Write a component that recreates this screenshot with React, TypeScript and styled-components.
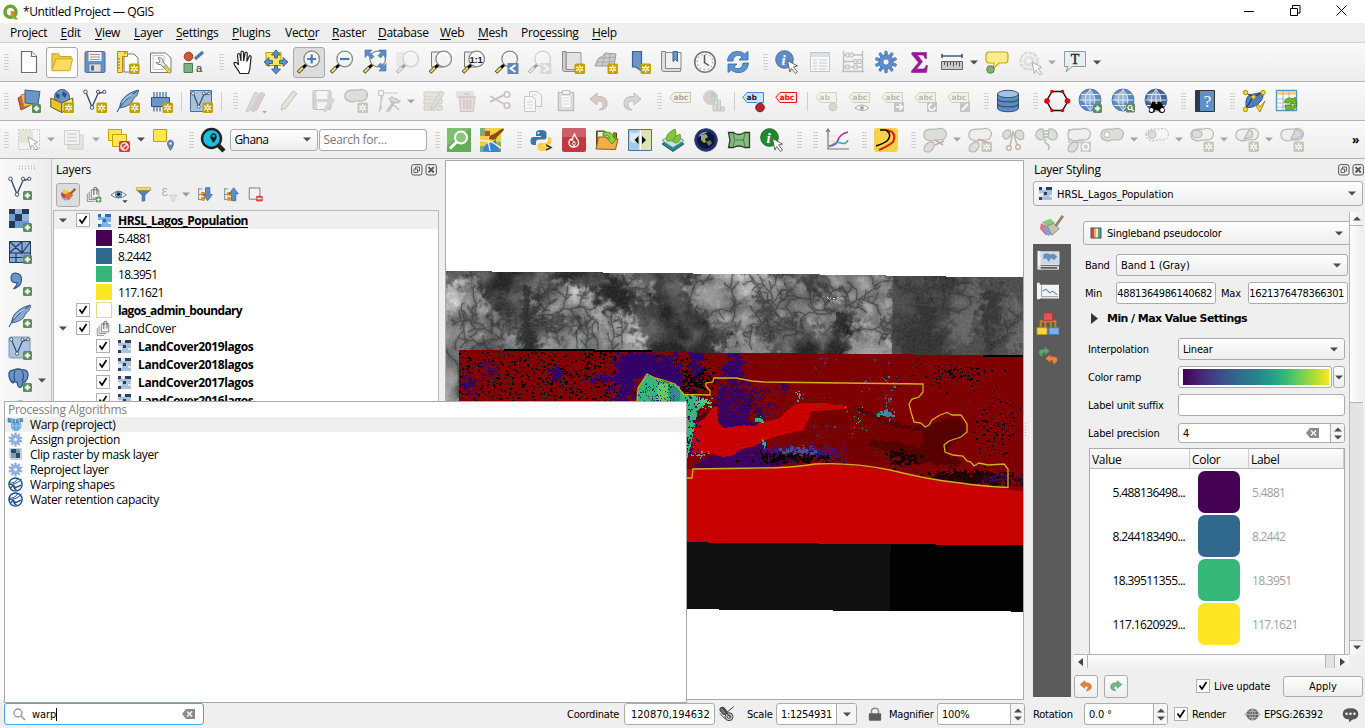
import React, { ReactNode } from "react";
import styled, { createGlobalStyle, css } from "styled-components";

/* ---------- base ---------- */

const Global = createGlobalStyle`
  * { box-sizing: border-box; }
  html, body { margin: 0; padding: 0; overflow: hidden; background: #efefef; }
  svg { display: block; flex: none; }
`;

const segoe = css`font-family: "Open Sans", "Noto Sans", sans-serif; font-stretch: normal; font-size: 12px; letter-spacing: -0.25px;`;
const tahoma = css`font-family: "DejaVu Sans Condensed", "DejaVu Sans", sans-serif; font-stretch: condensed; font-size: 11px; letter-spacing: -0.2px;`;

const Window = styled.div`
  position: relative;
  width: 1365px;
  height: 728px;
  display: flex;
  flex-direction: column;
  background: #efefef;
  color: #000;
  overflow: hidden;
  white-space: nowrap;
  line-height: 16px;
  ${segoe}
`;

const Text = styled.span<{ $w?: number; $ls?: number; $bold?: boolean; $color?: string; $u?: boolean }>`
  display: block;
  flex: none;
  white-space: pre;
  width: ${(p) => (p.$w ? p.$w + "px" : "auto")};
  ${(p) => p.$ls !== undefined && `letter-spacing: ${p.$ls}px;`}
  font-weight: ${(p) => (p.$bold ? 700 : 400)};
  ${(p) => p.$color && `color: ${p.$color};`}
  ${(p) => p.$u && "text-decoration: underline; text-underline-offset: 2px;"}
`;
const lowered = css`${Text} { padding-top: 2px; }`;

/* ---------- drawing helpers ---------- */

const rng = (seed: number) => () => {
  seed |= 0;
  seed = (seed + 0x6d2b79f5) | 0;
  let t = Math.imul(seed ^ (seed >>> 15), 1 | seed);
  t = (t + Math.imul(t ^ (t >>> 7), 61 | t)) ^ t;
  return ((t ^ (t >>> 14)) >>> 0) / 4294967296;
};

const Plus = ({ x = 15, y = 15 }: { x?: number; y?: number }) => (
  <g>
    <rect x={x} y={y} width="9" height="9" rx="1.5" fill="#5b8c5a" />
    <path d={`M${x + 4.5} ${y + 1.8}v5.4M${x + 1.8} ${y + 4.5}h5.4`} stroke="#fff" strokeWidth="2" />
  </g>
);
const Star = ({ x = 13.5, y = 13.5, c = "#c4a000" }: { x?: number; y?: number; c?: string }) => (
  <g>
    <rect x={x} y={y} width="10.5" height="10.5" rx="1.5" fill={c} />
    <path
      d={`M${x + 5.2} ${y + 1.5}v7.5M${x + 1.8} ${y + 3.4}l6.9 3.8M${x + 8.7} ${y + 3.4}l-6.9 3.8`}
      stroke="#fff"
      strokeWidth="1.4"
    />
    <circle cx={x + 5.2} cy={y + 5.3} r="1" fill={c} />
  </g>
);
const Lens = ({ children, back }: { children?: ReactNode; back?: boolean }) => (
  <g>
    {back && <path d="M2.5 2h12v15H2.5z" fill="#eee" stroke="#777" />}
    <path d="M1 22.5L6 17.5" stroke="#333" strokeWidth="3.6" />
    <path d="M1.5 22L6.5 17" stroke="#fcd94a" strokeWidth="2.2" />
    <path d="M6 17.6L9.5 14.5" stroke="#000" strokeWidth="3" />
    <circle cx="14.7" cy="9" r="7.8" fill="#f2f4f3" fillOpacity=".95" stroke="#888a85" strokeWidth="1.3" />
    <path d="M8.5 7a6.8 6.8 0 0 1 12-1" stroke="#fff" fill="none" strokeWidth="1.4" />
    {children}
  </g>
);
const Cursor = ({ x, y }: { x: number; y: number }) => (
  <path transform={`translate(${x} ${y})`} d="M0 0l10 5.5-4 1 4 5-2 1.5-4-5-1.6 3.6z" fill="#fff" stroke="#555" strokeWidth=".9" />
);
const Tag = ({ t, c = "#c9c5a8", f = "#f3f1e2", tc = "#aaa" }: { t: string; c?: string; f?: string; tc?: string }) => (
  <g>
    <path d="M.8 8.2L5 3.5h16.5v10H5z" fill={f} stroke={c} />
    <text x="4.6" y="11.4" fontFamily="DejaVu Sans" fontWeight="700" fontSize="7.6" fill={tc} letterSpacing="-.2">{t}</text>
  </g>
);
const VNodes = () => (
  <g fill="none" stroke="#3d4f63">
    <path d="M3 3.5L8.5 17M9.5 17L15 4.5L21 3" strokeWidth="1.4" />
    <circle cx="2.5" cy="2.8" r="1.8" fill="#fff" /><circle cx="9" cy="18.5" r="1.8" fill="#fff" />
    <circle cx="15" cy="2.8" r="1.6" fill="#fff" /><circle cx="21.3" cy="2.8" r="1.6" fill="#fff" />
  </g>
);
const Feather = () => (
  <g>
    <path d="M4 19C3 12 10 4 22.5 1C22 6 20 8 17 10C17 14 11 18 5 18.5z" fill="#84aad3" stroke="#3d5f88" strokeWidth="1" />
    <path d="M1 23Q6 12 21 2" fill="none" stroke="#3d5f88" strokeWidth="1.1" />
    <path d="M6 14Q10 8 17 5" stroke="#cfe0f2" fill="none" />
  </g>
);
const GlobeGrid = ({ f = "#5d89bf" }: { f?: string }) => (
  <g>
    <circle cx="12" cy="11" r="11" fill={f} stroke="#456b9b" strokeWidth=".8" />
    <ellipse cx="10" cy="9" rx="7" ry="6" fill="#fff" opacity=".35" />
    <path d="M1.5 11h21M3 5.5h18M3 16.5h18M12 .5v21M12 .5q-10 10.5 0 21M12 .5q10 10.5 0 21" stroke="#e8eef6" fill="none" strokeWidth=".9" />
  </g>
);
const Blob = ({ d, f = "#dcdedb" }: { d: string; f?: string }) => <path d={d} fill={f} stroke="#b7b9b5" strokeWidth="1.2" />;
const bean = "M1 6C2 -1 9 2 14 1C20 -1 25 3 23 8C21 14 16 11 12 12C7 14 0 12 1 6z";
const smallBlob = "M1 21C2 15 7 13 11 15C12 18 9 24 5 24C2 24 1 23 1 21z";
const Gear = ({ c = "#5d8dcb", s = "#3d6da8" }: { c?: string; s?: string }) => (
  <g>
    {Array.from({ length: 10 }, (_, i) => (
      <rect key={i} x="10.6" y="1" width="2.8" height="5" rx="1" fill={c} stroke={s} strokeWidth=".5" transform={`rotate(${i * 36} 12 12)`} />
    ))}
    <circle cx="12" cy="12" r="7.2" fill={c} stroke={s} strokeWidth=".6" />
    <circle cx="12" cy="12" r="3" fill="#f4f4f4" stroke={s} strokeWidth=".6" />
  </g>
);
const RasterGlyph = ({ c }: { c: string[] }) => (
  <g shapeRendering="crispEdges">
    <rect width="20" height="20" x="2" y="2" fill={c[1]} />
    <path d="M2 2h5v5H2zM17 2h5v5h-5zM10 9h5v5h-5zM2 17h5v5H2zM12 2h5v5h-5z" fill={c[0]} />
    <path d="M7 2h5v5H7zM2 11h6v6H2zM17 14h5v4h-5z" fill={c[2]} />
  </g>
);
const Bolt = (p: { d: string; c?: string; w?: number; f?: string }) => (
  <path d={p.d} stroke={p.c || "#555"} strokeWidth={p.w || 1.2} fill={p.f || "none"} />
);
const page = "M4.5 1.5h10l5 5v16h-15z";

const icons: Record<string, ReactNode> = {
  new: <><path d={page} fill="#fff" stroke="#6d6f6c" strokeWidth="1.2" /><Bolt d="M14.5 1.5v5h5" c="#6d6f6c" f="#fff" /></>,
  open: <><path d="M1 20V3h7l2 3h12V10" fill="#f2c843" stroke="#c19b1d" /><path d="M1 21.500L5.500 8.500h18l-3 13z" fill="#ffdc5e" stroke="#c8a224" /></>,
  save: <><rect x="2" y="1.500" width="20" height="21" rx="1.500" fill="#6292cc" stroke="#4a6d97" /><path d="M5.500 2h13v9h-13z" fill="#f2f2f2" /><Bolt d="M7 4.500h10M7 7h10M7 9.500h10" c="#999" /><path d="M6 14h12v8H6z" fill="#dedede" stroke="#777" strokeWidth=".7" /><path d="M8 15.500h3v5H8z" fill="#4a6d97" /></>,
  layoutNew: <><path d="M8 4h10l4 4v14H8z" fill="#fff" stroke="#777" /><path d="M1.500 1.500h10v5h-5v16h-5z" fill="#fcdd69" stroke="#b08d1d" /><Bolt d="M2 9h2M2 12h2M2 15h2M2 18h2M9 2v2" c="#8c6d10" w={1} /><Star x={13} /></>,
  layoutMgr: <><path d="M1.500 3h15l5.500 5v14.500H1.500z" fill="#fff" stroke="#777" /><path d="M4 5.500h11v14H4z" fill="none" stroke="#b8c7dd" /><path d="M9 8q3-1 4.500 1q1 2 .5 3l7 7.500-2 2-7.500-7q-3 1-4.500-2l3 .5 1-2z" fill="#e8e8e8" stroke="#666" strokeWidth=".8" /><path d="M16 15.500l6 6-1.500 2-6-6.500z" fill="#fcd94a" stroke="#a8871b" strokeWidth=".7" /></>,
  styleMgr: <><circle cx="6.500" cy="6.500" r="4.300" fill="#cb5a30" stroke="#a2401c" /><Bolt d="M13 9l8-7" c="#4a7ab5" w={3} /><path d="M2 13.500h8.500v9H2z" fill="#7fae82" stroke="#4c7a50" /><text x="14" y="21.500" fontSize="11" fontFamily="Liberation Sans" fill="#444" stroke="#444" strokeWidth=".2">a</text></>,
  hand: <path d="M9 23.500C7 19 3 16 3 13C4 11.500 6 12.500 7.500 15L6.500 5C6.700 3 8.700 3 9 5L10 11V2.500C10.200.5 12.300.5 12.500 2.500L12.700 11L14 3.500C14.500 1.500 16.500 2 16.300 4L15.800 11.500L18 6.500C19 5 20.800 6 20 8C19 13 20 18 17.500 23.500z" fill="#fff" stroke="#222" strokeWidth="1.200" />,
  pan: <><path d="M2 2.500h15v13H2z" fill="#fce94f" stroke="#c4a000" /><path d="M12 0l4.500 5h-3v3h-3V5h-3zM12 24l4.500-5h-3v-3.500h-3V19h-3zM0 12l5-4.500v3h3.500v3H5v3zM24 12l-5-4.500v3h-3.500v3H19v3z" fill="#5d8dcb" stroke="#33557f" strokeWidth=".8" /></>,
  zoomIn: <Lens><Bolt d="M14.700 4.500v9M10.200 9h9" c="#4a7ab5" w={2.200} /></Lens>,
  zoomOut: <Lens><Bolt d="M10 9h9.400" c="#4a7ab5" w={2.200} /></Lens>,
  zoomFull: <><Lens /><path d="M2 0h7L7 2.500l4 4L8.500 9l-4-4L2 7.500zM23 0h-7l2 2.500-3 3L17.500 8l3-3 2.500 2.500zM23 21h-7l2-2.500-3-3 2.500-2.500 3 3 2.500-2.500z" fill="#5d8dcb" stroke="#456b9b" strokeWidth=".6" /></>,
  zoomSel: <g opacity=".35"><path d="M1 3h11v13H1z" fill="#dcd9b8" stroke="#bbb" /><g filter="grayscale(1)"><Lens /></g></g>,
  zoomLayer: <Lens back />,
  zoomNative: <Lens back><text x="7.500" y="12.600" fontSize="9.500" fontWeight="700" fontFamily="Liberation Sans" fill="#222">1:1</text></Lens>,
  zoomLast: <><Lens /><path d="M12.500 13h11v11h-11z" fill="#5f87b5" /><Bolt d="M20.500 15l-5 3.500 5 3.500" c="#fff" w={2} /></>,
  zoomNext: <g opacity=".35" style={{ filter: "grayscale(1)" }}><Lens /><path d="M12.500 13h11v11h-11z" fill="#aaa" /><Bolt d="M15.500 15l5 3.500-5 3.500" c="#fff" w={2} /></g>,
  mapView: <><path d="M5 2.500h15v17H5z" fill="#e3e3e3" stroke="#999" /><path d="M1.500 1.500h3.500v18h15v2H4q-2.500 0-2.500-2z" fill="#d0d0d0" stroke="#888" /><Star /></>,
  map3d: <><path d="M1 16Q3 10 5 8Q9 7 11 3L22 4L20 16z" fill="#ccc" stroke="#999" /><Bolt d="M3 12q8 1 18-1M6 8q7 0 15-1M11 4l-3 12M16 4l-1 12" c="#aaa" w={1} /><Star /></>,
  bmNew: <><path d="M5.500 1.500h9V21l-6-4-3 0z" fill="#6b95c8" stroke="#3d5f88" strokeWidth="1.200" /><Star /></>,
  bmShow: <><path d="M5 2.500h16v17H5z" fill="#f0f0f0" stroke="#888" /><path d="M1.500 1.500h4v17h15v3H4q-2.500 0-2.500-2z" fill="#ddd" stroke="#888" /><path d="M13 1.500h4.500v10l-2.200-2-2.300 2z" fill="#6b95c8" stroke="#3d5f88" /></>,
  clock: <><circle cx="12" cy="12" r="10.300" fill="#f4f4f4" stroke="#767676" strokeWidth="1.600" /><circle cx="12" cy="12" r="7.800" fill="none" stroke="#4a7ab5" strokeDasharray="1.200 2.900" /><Bolt d="M11.500 5v7.500l4.500 3" c="#555" w={1.500} /></>,
  refresh: <><path d="M1.500 11C2 4 7 1 12 1.500c3 0 5 1 6.500 2.500L22 1.500V10h-9l3-3C13 4 7.500 5 7 11z" fill="#5b92d0" stroke="#3569a8" strokeWidth=".8" /><path d="M22.500 13C22 20 17 23 12 22.500c-3 0-5-1-6.500-2.500L2 22.500V14h9l-3 3c3 3 8.500 2 9-4z" fill="#5b92d0" stroke="#3569a8" strokeWidth=".8" /></>,
  identify: <><circle cx="9.500" cy="9.500" r="8.800" fill="#5d8dc8" stroke="#4a719f" /><text x="6.500" y="15" fontSize="15" fontStyle="italic" fontWeight="700" fontFamily="Liberation Serif" fill="#fff">i</text><Cursor x={12.500} y={10.500} /></>,
  table: <g opacity=".45"><path d="M2.500 2.500h19v19h-19z" fill="#fff" stroke="#888" /><path d="M3 3h18v4H3z" fill="#b5c5d8" /><Bolt d="M5 10h4M11 10h8M5 13h4M11 13h8M5 16h4M11 16h8M5 19h4M11 19h8" c="#999" /></g>,
  abacus: <g opacity=".7" fill="none" stroke="#aaa"><path d="M2.500 1v21M21.500 1v21M2 5h20M2 11.500h20M2 17h20M1 21.500h22" strokeWidth="1.400" /><path d="M5 3h3v4H5zM9 3h3v4H9zM13 9.500h3v4h-3zM17 9.500h3v4h-3zM5 15h3v4H5zM13 15h3v4h-3z" fill="#eee" /></g>,
  gear: <Gear />,
  sigma: <path d="M5 2.500h14.500v6h-1.600Q17.500 5 15 5H10.500l5 6.700L9.500 19H16q2.300 0 3-3.500h1.500L19.500 22.500H4.500v-1.500l7-8.500-7-8.500z" fill="#a414a0" stroke="#75107a" strokeWidth=".5" />,
  measure: <><Bolt d="M2 6h20M2 4v4M22 4v4" c="#3f6189" w={1.700} /><path d="M1.500 11.500h21v8h-21z" fill="#c9cbc8" stroke="#666" /><Bolt d="M4.500 12v3M7.500 12v4.500M10.500 12v3M13.500 12v4.500M16.500 12v3M19.500 12v4.500" c="#555" w={1} /></>,
  tip: <><path d="M4 2h16q3 0 3 3v4q0 4-3 4h-6l-6 6 1-6H4q-3 0-3-4V5q0-3 3-3z" fill="#fbee8a" stroke="#c8a712" strokeWidth="1.200" /><circle cx="5.500" cy="19.500" r="3.800" fill="#7fb06f" stroke="#55804a" /></>,
  action: <g opacity=".45"><circle cx="11" cy="11" r="8.600" fill="#eee" stroke="#bbb" strokeWidth="2.500" strokeDasharray="4 1" /><circle cx="11" cy="11" r="5.500" fill="#ccc" /><path d="M9 8l5 3-5 3z" fill="#fff" /><Cursor x={14} y={12} /></g>,
  textAnn: <><path d="M1.500 1.500h21v15H9L3 22l2-5.500H1.500z" fill="#e8eef2" stroke="#8d9aa3" /><text x="12" y="13.800" textAnchor="middle" fontSize="14" fontFamily="Liberation Serif" fill="#222" stroke="#222" strokeWidth=".4">T</text></>,

  dsm: <><path d="M1 9l9-5 4 12-10 5z" fill="#d0643a" stroke="#9b4423" /><path d="M4 6l11-3 2 12-10 3z" fill="#f3c044" stroke="#b38a20" /><path d="M8 1l15 1.500-2 13L8 14z" fill="#6b95c8" stroke="#3d5f88" /><Plus /></>,
  geopackage: <><circle cx="12" cy="8" r="7.500" fill="#6b95c8" stroke="#3d5f88" /><path d="M6 4l4 2-1 4-3-2zM13 2l4 3-2 4-3-3z" fill="#31517c" /><path d="M.8 9l11 5v9.500L.8 18z" fill="#e6c42e" stroke="#70590a" /><path d="M11.800 14l11-5v9l-11 5.500z" fill="#fdf08a" stroke="#70590a" /><Star /></>,
  shp: <><VNodes /><Star /></>,
  spatialite: <><Feather /><Star /></>,
  memory: <><path d="M2.500 8.500h18v9h-18z" fill="#6b95c8" stroke="#31517c" /><Bolt d="M5 3v5M8 3v5M11 3v5M14 3v5M17 3v5M5 18v4.500M8 18v4.500M11 18v4.500" c="#456b9b" w={1.300} /><Star /></>,
  virtual: <><path d="M1.500 1.500h21v21h-21z" fill="#a9c3e0" stroke="#4a6d97" /><g transform="translate(2 2) scale(.85)"><VNodes /></g><Star /></>,
  pencils: <g opacity=".45"><path d="M2 20l8-17 4 2-8 16-5 2z" fill="#bbb" stroke="#999" /><path d="M8 20l8-17 4 2-8 16-5 2z" fill="#b9a39a" stroke="#998" /><path d="M17 22h5l-2.500 2.500z" fill="#555" /></g>,
  pencil: <path d="M3 21l1-5L15 2l4 2.500L8 19z" fill="#e3e3da" stroke="#c2c1b8" />,
  saveEdit: <g opacity=".4"><rect x="2" y="1.500" width="18" height="19" rx="1.500" fill="#aaa" stroke="#777" /><path d="M5.500 2h11v8h-11zM6 13h10v7H6z" fill="#f5f5f5" /><path d="M13 23l1-4 7-10 2.500 2-7 10z" fill="#c9a79c" stroke="#999" /></g>,
  addPoly: <g><Blob d={bean} /><Star c="#c9c6b8" /></g>,
  vertex: <g opacity=".5"><Bolt d="M4 21V4h17M6 4L2 23" c="#999" /><path d="M1.500 1.500h5v5h-5z" fill="#eee" stroke="#999" /><path d="M10 22l6-9-4-3 3-2 8 4-2 2-3-1-6 9zM13 12l9 9" fill="#ccc" stroke="#999" strokeWidth="1.500" /></g>,
  modAttr: <g opacity=".5"><path d="M2 3h18v5H2zM2 10h18v5H2zM2 17h18v4H2z" fill="#d8d5bf" stroke="#aaa48a" /><path d="M9 20l1-4L19 2l3 2-9 14z" fill="#ccc" stroke="#999" /></g>,
  trash: <g opacity=".5"><path d="M1 2h18v7H1z" fill="#d8cfc4" /><path d="M4 8.500h16l-1.500 14h-13z" fill="#d9c6c2" stroke="#b19a96" /><Bolt d="M3 8h18M9 5h6M9 11v9M12 11v9M15 11v9" c="#b19a96" w={1.500} /></g>,
  cut: <g opacity=".5"><Bolt d="M2 7l14 8M2 13l14-7" c="#999" w={2} /><circle cx="19" cy="5.500" r="2.800" fill="none" stroke="#a9908c" strokeWidth="1.600" /><circle cx="19" cy="16.500" r="2.800" fill="none" stroke="#a9908c" strokeWidth="1.600" /></g>,
  copy: <g opacity=".5"><path d="M8.500 2.500h8l4 4v11h-12z" fill="#f5f5f5" stroke="#999" /><path d="M3.500 7.500h8l3 3v12h-11z" fill="#fff" stroke="#999" /><Bolt d="M6 13h6M6 16h6M6 19h6M11 6h5" c="#bbb" /></g>,
  paste: <g opacity=".5"><path d="M4.500 3.500h15v18h-15z" fill="#ddd" stroke="#888" strokeWidth="1.500" /><path d="M7 6h10v13H7z" fill="#fff" stroke="#aaa" /><path d="M8.500 1.500h7v4h-7z" fill="#eee" stroke="#888" /><Bolt d="M9 9h6M9 12h6M9 15h6" c="#bbb" /></g>,
  undoG: <path d="M10 4L3 10l7 6v-4q7-1 6 5-1 3-4 4 9 0 8-8-1-6-10-5.500z" fill="#d9cdc6" stroke="#c4b8b1" />,
  redoG: <path d="M14 4l7 6-7 6v-4q-7-1-6 5 1 3 4 4-9 0-8-8 1-6 10-5.500z" fill="#d3d8d4" stroke="#b9beb9" />,
  abc: <Tag t="abc" />,
  diagram: <g opacity=".6"><circle cx="8.500" cy="8.500" r="7" fill="#c5b7ae" stroke="#bbb" /><path d="M8.500 8.500V1.500A7 7 0 0 1 15.500 8.500z" fill="#aab" /><path d="M8.500 8.500h7A7 7 0 0 1 8.500 15.500z" fill="#a9bda5" /><path d="M11 15h4v7h-4zM15.500 11h3v11h-3zM19 18h3.500v4H19z" fill="#ccc" stroke="#aaa" /></g>,
  abPin: <><Tag t="ab" c="#4a86cf" f="#cfe4fa" tc="#222" /><Bolt d="M16 9v6" c="#ddd" w={2} /><circle cx="18" cy="18.500" r="4.300" fill="#b3262a" stroke="#7d1518" /></>,
  abcRed: <Tag t="abc" c="#e11" f="#ffecec" tc="#e11" />,
  abPinG: <g opacity=".7"><Tag t="ab" /><circle cx="18" cy="18" r="4" fill="#ccc" stroke="#bbb" /></g>,
  abcEye: <g opacity=".8"><Tag t="abc" /><path d="M7 19q6-6 14 0-6 5-14 0z" fill="#fff" stroke="#999" /><circle cx="14" cy="19" r="2" fill="#999" /></g>,
  abcMove: <g opacity=".8"><Tag t="abc" /><path d="M13 13h10v10H13z" fill="#bbb" /><Bolt d="M15 18h6M18.500 15l3 3-3 3" c="#fff" w={1.600} /></g>,
  abcRot: <g opacity=".8"><Tag t="abc" /><path d="M13 13h10v10H13z" fill="#bbb" /><circle cx="18" cy="18" r="3" fill="none" stroke="#fff" strokeWidth="1.500" strokeDasharray="14 5" /></g>,
  abcEdit: <g opacity=".8"><Tag t="abc" /><path d="M13 13h10v10H13z" fill="#bbb" /><Bolt d="M15 21l6-6" c="#fff" w={2} /></g>,
  db: <><path d="M1.500 5v14c0 5 21 5 21 0V5z" fill="#5d8dc8" stroke="#3d5068" /><ellipse cx="12" cy="5" rx="10.500" ry="3.700" fill="#a3c1e3" stroke="#3d5068" /><Bolt d="M1.500 9.500c0 4.500 21 4.500 21 0M1.500 14.500c0 4.500 21 4.500 21 0" c="#3d5068" w={1.300} /></>,
  hexagon: <><path d="M7 2.500h10.500L23 12l-5.500 9.500H7L1.500 12z" fill="none" stroke="#111" strokeWidth="1.400" /><g fill="#e3000f"><circle cx="7" cy="2.500" r="1.800" /><circle cx="17.500" cy="2.500" r="1.800" /><circle cx="7" cy="21.500" r="1.800" /><circle cx="17.500" cy="21.500" r="1.800" /><circle cx="2" cy="12" r="2.800" /><circle cx="22.500" cy="12" r="2.800" /></g></>,
  globePlus: <><GlobeGrid /><Plus /></>,
  globeFind: <><GlobeGrid /><rect x="15" y="14.500" width="9" height="9" rx="1" fill="#5b8c5a" /><circle cx="19" cy="18.500" r="2" fill="none" stroke="#fff" strokeWidth="1.200" /><Bolt d="M20.500 20l2 2" c="#fff" /></>,
  globeBino: <><GlobeGrid f="#3e6492" /><path d="M5 21L8 13h3.500v2h2v-2H17l4 8q0 3-3 3t-4-3h-3q0 3-3.500 3T5 21z" fill="#000" /><circle cx="7.500" cy="21" r="2" fill="#fff" /><circle cx="18.200" cy="21" r="2" fill="#fff" /></>,
  help: <><path d="M2.500 1.500h19v21h-19z" fill="#5f8fc6" stroke="#333" /><path d="M2.500 1.500h4.500v21H2.500z" fill="#2c3a4c" /><text x="14.500" y="18" textAnchor="middle" fontSize="17" fontFamily="Liberation Serif" fill="#fff">?</text></>,
  topo: <><path d="M4 12Q5 5 12 5L21 3Q22 10 17 14Q10 20 4 18z" fill="#4f7fbd" stroke="#33557f" /><Bolt d="M4 4l8 4 9-5M11 8L3 21" c="#222" w={1} /><path d="M14 17l4 6 5-11-5 6-2-3z" fill="#f9d423" stroke="#7a6310" strokeWidth=".7" /><g fill="#f7d92d" stroke="#a98f13"><circle cx="3.500" cy="3.500" r="2.200" /><circle cx="21" cy="3.500" r="2.200" /><circle cx="11.500" cy="8" r="2" /><circle cx="3.500" cy="20.500" r="2.200" /></g></>,
  tableRefresh: <><path d="M1.500 1.500h20v20h-20z" fill="#fff" stroke="#5c95ba" strokeWidth="1.400" /><path d="M2 2h19v4H2z" fill="#f8cf8d" /><Bolt d="M2 10h19M2 14h19M2 18h19M8 2v19M14 2v19" c="#9dc3da" /><path d="M9 13q3-6 9-3l2-2 2 7h-7l2-2q-3-1-4 1zM22 16q-2 7-9 4l-2 2-1-6 7 0-2 2q3 1 4-2z" fill="#69bf1f" stroke="#3c7e0d" strokeWidth=".7" /></>,

  select: <g opacity=".5"><path d="M2 2h14v13H2z" fill="#d8d5bf" /><path d="M1.500 1.500h21v20h-21z" fill="none" stroke="#999" strokeDasharray="2 1.500" /><Cursor x={11} y={9} /></g>,
  selForm: <g opacity=".5"><path d="M6 7h15v14H6z" fill="#ddd9c4" stroke="#aaa" /><path d="M2.500 2.500h15v14h-15z" fill="#f0f0ea" stroke="#aaa" /><Bolt d="M5 6h10M5 9.500h10M5 13h10" c="#bbb" w={1.500} /></g>,
  deselect: <><path d="M1.500 1.500h13v11h-13z" fill="#fce94f" stroke="#c4a000" /><path d="M5.500 6.500h14v12h-14z" fill="#fce94f" stroke="#c4a000" /><rect x="12" y="13" width="11" height="11" rx="1.500" fill="#d43c3c" /><circle cx="17.500" cy="18.500" r="3.600" fill="none" stroke="#fff" strokeWidth="1.400" /><Bolt d="M15 21l5-5" c="#fff" w={1.400} /></>,
  selLoc: <><path d="M1.500 1.500h13v12h-13z" fill="#fce94f" stroke="#c4a000" /><path d="M18.500 22.500q-4-6-3-8 1-2.500 3-2.500t3 2.500q1 2-3 8z" fill="#5f87a8" stroke="#446" strokeWidth=".5" /><circle cx="18.500" cy="15.500" r="1.200" fill="#fff" /></>,
  locator: <><Bolt d="M17 17l6 6" c="#222" w={4.500} /><circle cx="10.500" cy="10.500" r="9.500" fill="#17c3dc" stroke="#222" strokeWidth="2.400" /><path d="M12.500 15q-4-5-3-7.500 1-2.500 3-2.500t3 2.500q1 2.500-3 7.500z" fill="#123" /><circle cx="12.500" cy="8" r="1.300" fill="#17c3dc" /></>,
  greenLens: <><path d="M0 0h24v24H0z" fill="#63ad54" /><path d="M0 0h24L0 18z" fill="#8fc983" opacity=".6" /><circle cx="14" cy="9.500" r="6" fill="#8ac47d" stroke="#fff" strokeWidth="2" /><Bolt d="M9.500 14L3 20.500" c="#fff" w={3} /></>,
  osm: <><path d="M0 0h21v24H0z" fill="#f3cf46" /><path d="M0 0h5v8H0zM15 14h6v9h-6zM0 18h6v6H0z" fill="#7fb06f" /><path d="M3 23q1-7 6-8t7-4v6l5 7H8z" fill="#3e80cc" /><path d="M5 3h5v5H5z" fill="#b8464a" /><Bolt d="M0 12l12 2 9 6M8 12l2 11" c="#fff" w={1.200} /><path d="M9 11Q9 7 14 6L23 0l1 2-7 7q-1 4-8 2z" fill="#8a4a1c" /></>,
  python: <><path d="M11.500 2Q7 2 7 5v3h5v1H4.500Q1.500 9 1.500 13t3 4H7v-3q0-2.500 3-2.500h5q2.500 0 2.500-3V5Q17.500 2 11.500 2z" fill="#3c76a8" /><path d="M19 9v3q0 3-3 3h-4.500Q8.500 15 8.500 18v2q0 3 4.500 3t5-3v-2h-4v-1h5.500q3 0 3-4t-3-4z" fill="#fdcf43" /><circle cx="9.500" cy="5" r="1" fill="#fff" /><Bolt d="M17 17l5 2.500-5 2.500" c="#333" w={1.500} /></>,
  fire: <><rect width="24" height="24" rx="2" fill="#bf3a3c" /><path d="M0 0h24v9H0z" fill="#d2707c" opacity=".7" /><path d="M12 19c-6 0-6-6-3-8 .5 1 1 1.500 1.500 1 0-3 0-4 2-6 0 3 4 5 4 8.500 0 3-2 4.500-4.500 4.500z" fill="none" stroke="#fff" strokeWidth="1.300" /><Bolt d="M12 18q-3-2 0-5 3 3 0 5" c="#fff" w={1} /></>,
  folderArrow: <><path d="M1.500 20V3h8l2 2h10v5" fill="#9c7a3d" stroke="#5c4213" /><path d="M3 4h15v7H3z" fill="#f5f2e6" /><path d="M1 21L3.500 9h8l1 2H23l-2.500 10.500z" fill="#f3ae4c" stroke="#8c5c12" /><path d="M8 5q9-3 11 5h3l-5 6-5-6h3q-1-3-7-2z" fill="#8bd634" stroke="#3f7e0d" strokeWidth=".8" /></>,
  swipe: <><path d="M.500 1.500h23v21H.500z" fill="#a7cbe6" stroke="#4e7291" /><path d="M12 2h11v20H12z" fill="#d8e7b0" /><path d="M2 4q5 2 9 0v9q-5 3-9 0z" fill="#dbeaf5" /><path d="M11.500 2h1.500v20h-1.500z" fill="#fff" /><path d="M10.500 8v8l-4-4zM14 8v8l4-4z" fill="#111" /></>,
  leafLayers: <><path d="M1 16l11-7 11 7-11 7.500z" fill="#2d8289" stroke="#1f6068" /><path d="M1 12.500l11-7 11 7-11 7z" fill="#c9e3e2" stroke="#5c9ea3" /><path d="M6 13Q3 6 14 1q3 9-3 12zM12 14q0-5 7-8 2 8-4 9z" fill="#84c341" stroke="#6aa52e" /></>,
  nightGlobe: <><circle cx="12" cy="12" r="11.300" fill="#232c6a" stroke="#3b3f7a" /><circle cx="12" cy="12" r="8.500" fill="#0d1638" /><path d="M7 7l5-1 2 3-3 2 1 3-2 1-3-3z" fill="#9aa860" /><path d="M12 14l4-2 2 3-3 3z" fill="#5f7e5c" /><path d="M4 9q3-6 10-5l-6 3z" fill="#6f9ad0" /></>,
  bowtie: <><path d="M1.500 4.500h5q5 4 11 0h5v7l0 8h-5q-6-3-11 0h-5l1.500-7z" fill="#84bd7d" stroke="#2c3a2a" strokeWidth="1.300" /><Bolt d="M6 5q3 7 0 14M18 5q-3 7 0 14M8 12h9" c="#4a6a48" w={.8} /></>,
  greenInfo: <><circle cx="9.500" cy="9.500" r="8.800" fill="#1f8a2d" stroke="#136a1f" /><text x="6.500" y="15" fontSize="15" fontStyle="italic" fontWeight="700" fontFamily="Liberation Serif" fill="#fff">i</text><Cursor x={12.500} y={10.500} /></>,
  plot: <><Bolt d="M3 1v20h21M1 4l2-3 2 3" c="#777" /><Bolt d="M4 18q7 0 9-6t10-8" c="#b3349e" w={1.800} /><Bolt d="M4 19q7-6 12-4t7-3" c="#4d9db5" w={1.500} /><Bolt d="M4 13h6M4 8h8" c="#ccc" w={.6} /></>,
  profile: <><rect width="24" height="24" rx="3" fill="#f6d246" /><path d="M13 2l5 2q4 4 1 10-5 4-14 8" fill="none" stroke="#e01b1b" strokeWidth="2.200" /><Bolt d="M6 2h6l3 3q2 4-2 8-4 3-11 5" c="#000" w={1.500} /></>,
  g1: <><Blob d={bean} /><Blob d={smallBlob} /><Bolt d="M12 12l8 5M12 17l9-4" c="#c5aaa6" w={1.500} /></>,
  g2: <><Blob d={bean} f="#eee" /><Blob d={smallBlob} /><Star c="#c9c6b8" /><Bolt d="M10 11l10 4" c="#c5aaa6" w={1.500} /></>,
  g3: <><Blob d="M9 2C3 1 0 7 3 10C6 13 9 9 10 6zM15 3C22 0 24 7 22 11C18 13 15 9 14 7z" /><Bolt d="M12 3L9 18M12 3l4 14" c="#b7b9b5" w={1.500} /><circle cx="8" cy="20" r="2.300" fill="none" stroke="#c5aaa6" strokeWidth="1.300" /><circle cx="17" cy="19" r="2.300" fill="none" stroke="#c5aaa6" strokeWidth="1.300" /></>,
  g4: <><Blob d="M9 1C3 0 0 7 3 10C6 13 9 12 10 10zM15 1C22 0 25 7 22 11C18 13 15 11 14 9z" /><Bolt d="M9 3h6M9 6h6M9 9h6M12 11q-3 3 1 5t1 6" c="#b7b9b5" w={1.500} /></>,
  g5: <><path d="M1.500 1.500h14v13h-14z" fill="#dedbc8" stroke="#c5c2ae" strokeDasharray="2 1" /><Blob d={bean} f="#eee" /><Blob d={smallBlob} /><rect x="13.500" y="13.500" width="10.500" height="10.500" fill="#ccc" /><circle cx="18.700" cy="18.700" r="3" fill="none" stroke="#fff" strokeWidth="1.400" /></>,
  g6: <><Blob d={bean} /><circle cx="7" cy="6.500" r="3" fill="#f5f5f5" stroke="#b7b9b5" /></>,
  g7: <><path d={bean} fill="none" stroke="#b7b9b5" strokeDasharray="2 1.500" /><circle cx="7" cy="6.500" r="4" fill="#dcdedb" stroke="#b7b9b5" /></>,
  g8: <><Blob d={bean} f="#f1f1f1" /><Blob d="M2 6a5 4 0 1 0 10 0a5 4 0 1 0-10 0z" /><Star c="#c9c6b8" /></>,
  g9: <><Blob d={bean} f="#eee" /><Blob d="M9 11L14 2Q19 2 17 9z" /><Star c="#c9c6b8" /></>,
  g10: <><Blob d={bean} f="#eee" /><Blob d="M11 11L15 2Q22 1 22 8Q17 12 11 11z" f="#d2d6e2" /><Star c="#c9c6b8" /></>,

  addVector: <><VNodes /><Plus /></>,
  addRaster: <><g shapeRendering="crispEdges"><path d="M1 1h20v19H1z" fill="#6e9ac9" /><path d="M1 1h6v5H1zM14 1h7v5h-7zM7 6h7v7H7zM1 13h6v7H1z" fill="#223a5a" /><path d="M7 1h7v5H7zM14 6h7v7h-7z" fill="#8fb3dc" /></g><Plus /></>,
  addMesh: <><path d="M1.500 1.500h21v21h-21z" fill="#86abd5" stroke="#223a5a" /><Bolt d="M1.500 13h21M14 1.500V13L22.500 1.500M1.500 1.500L14 13M14 1.500L1.500 13M8 13v9M1.500 17.500h13" c="#223a5a" w={1.200} /><Plus /></>,
  addCsv: <><path d="M7 1q7 0 6.500 7 0 6-8 9 4-4 3.500-6.500-6 1-6-4.500Q3 1.500 7 1z" fill="#6b95c8" stroke="#31517c" strokeWidth="1.100" /><Plus /></>,
  addFeather: <><Feather /><Plus /></>,
  addVirtual: <><rect x="1" y="1" width="21" height="21" rx="1.500" fill="#a9c3e0" stroke="#7f98b5" /><g transform="translate(1 1) scale(.9)"><VNodes /></g><Plus /></>,
  addPg: <><path d="M1 8Q0 2 6 2q4-2 8 0 6-1 6 5 0 4-3 7h-2l-1 4q-2 3-4 0l-1-4q-2 1-3-1l-1 2Q2 13 1 8z" fill="#6b95c8" stroke="#31517c" strokeWidth="1.300" /><Bolt d="M7 3q-2 5 0 10M14 3q3 5 0 10" c="#31517c" w={1.200} /><Plus /></>,
  addDb: <ellipse cx="12" cy="6" rx="8" ry="5" fill="#6b95c8" stroke="#456b9b" />,
  brush: <><path d="M2 7l8 4 4 5-6 6Q2 20 0 14z" fill="#7ea6e0" /><path d="M1 8l9 3-4 7Q1 16 0 12z" fill="#c9434f" /><path d="M5 4l8 3-2 7-9-5z" fill="#f4cf3a" /><path d="M6 13l8-5 5 5-7 8z" fill="#ee6a30" stroke="#c4501f" strokeWidth=".7" /><Bolt d="M15 11L23 3" c="#8b6b3a" w={3.500} /></>,
  brush2: <><path d="M2 8l9-4 5 4-5 8z" fill="#8ec77d" /><path d="M1 9l6 3 3 9-4 1-6-7z" fill="#e07188" /><path d="M3 14l8-2 4 8-6 3z" fill="#74a8dc" /><path d="M8 12l7-3 6 6-8 7z" fill="#c8c2b2" stroke="#85796a" strokeWidth=".8" /><Bolt d="M17 12L25 1" c="#93826b" w={3} /></>,
  group: <><path d="M8.500 4.500h12v13h-12z" fill="#f4f4f4" stroke="#777" strokeWidth="1.400" /><Bolt d="M5 8v12h11M2 11v12h11" c="#777" w={1.300} /><Bolt d="M12.500 13V3q0-2.500 2.500-2.500t2.500 2.500v9" c="#444" w={1.400} /></>,
  addGroup: <><path d="M8.500 4.500h12v13h-12z" fill="#f4f4f4" stroke="#777" strokeWidth="1.400" /><Bolt d="M5 8v12h11M2 11v12h11" c="#777" w={1.300} /><Bolt d="M12.500 13V3q0-2.500 2.500-2.500t2.500 2.500v9" c="#444" w={1.400} /><Plus x={15.500} y={15.500} /></>,
  eye: <><path d="M0 12Q11 1 23 12Q11 21 0 12z" fill="#fff" stroke="#777" strokeWidth="1.500" /><circle cx="11.500" cy="11" r="5" fill="#6a93c4" stroke="#456b9b" /><circle cx="11.500" cy="11" r="2.200" fill="#111" /><path d="M17 20h8l-4 4z" fill="#444" /></>,
  filter: <><path d="M1 2h22v3l-8.500 8v9l-5 1v-10L1 5z" fill="#4f7fb5" stroke="#3d5f88" strokeWidth=".6" /><path d="M.500 1h23v4h-23z" fill="#fce94f" stroke="#c4a000" /></>,
  epsilon: <g opacity=".55"><text x="-1" y="15" fontSize="24" fontFamily="Liberation Sans" fill="#888">ε</text><path d="M12 13h12l-4 5v5l-4 0v-5z" fill="#ddd" stroke="#999" /></g>,
  expand: <><Bolt d="M1 2v19M1 3h6M1 12h6M1 20h6" c="#888" w={1.500} /><path d="M5 8h6v6H5zM5 16h6v6H5z" fill="#f08a24" /><path d="M12 1h7v11h4l-7.500 10L8 12h4z" fill="#5d8dc8" stroke="#33557f" /></>,
  collapse: <><Bolt d="M1 2v19M1 3h6M1 12h6M1 20h6" c="#888" w={1.500} /><path d="M5 8h6v6H5zM5 16h6v6H5z" fill="#f08a24" /><path d="M12 22h7V11h4L15.500 1 8 11h4z" fill="#5d8dc8" stroke="#33557f" /></>,
  remove: <><path d="M2 1.500h17v18H2z" fill="#f2f2f2" stroke="#777" strokeWidth="1.500" /><rect x="13" y="14" width="10.500" height="9" rx="2" fill="#e04747" /><Bolt d="M15 18.500h6.500" c="#fff" w={2.200} /></>,
  raster: <RasterGlyph c={["#2b3f58", "#a9c1de", "#dfe9f4"]} />,
  rasterB: <RasterGlyph c={["#2d6db0", "#7fb0e2", "#e8f1fa"]} />,
  clip: <g shapeRendering="crispEdges"><path d="M1 1h22v20H6L1 17z" fill="#c9d3d8" /><path d="M5 3h7v7H5zM12 10h7v7h-7z" fill="#2d4c66" /><path d="M12 3h7v7h-7zM5 10h7v7H5z" fill="#7f9db0" /></g>,
  warp: <><circle cx="13" cy="14" r="8.500" fill="#5da2d4" /><Bolt d="M5 14h16M13 5v18M8 8q-3 6 1 13M18 8q3 6-1 13" c="#b9def5" w={1} /><path d="M0 2q12 4 23 0l1 5q-12 4-24 1z" fill="#5a92c0" stroke="#3f78a6" /><Bolt d="M6 4l1 5M12 4v5M18 4v5" c="#cde8fa" /></>,
  gearL: <Gear c="#8fb0e0" s="#7898cc" />,
  saga: <><circle cx="12" cy="12" r="10.500" fill="#f4f9fd" stroke="#1c5288" strokeWidth="2.200" /><path d="M2 10Q12 10 16 2M1.500 12.500Q14 12 22 3" fill="none" stroke="#1c5288" strokeWidth="1.600" /><path d="M4 18L8 13L12 17L21 13M9 13Q9 19 14 21" fill="none" stroke="#1c5288" strokeWidth="2.200" /></>,
  transparency: <><path d="M.500 1h3.500v20H.500z" fill="#f2f2f2" /><path d="M4 2h20v14H4z" fill="#c9d8ea" stroke="#eee" /><path d="M7 5q4-3 7 0l4-1 4 3-3 4-4-2-2 4-3-4-3 1z" fill="#6b8db5" /><path d="M1 17.500h23v4H1z" fill="#d9d9d9" /><Bolt d="M4 19.500h18" c="#333" w={1.400} /></>,
  histogram: <><path d="M0 2h3v18H0zM3 4h21v15H3z" fill="#f4f4f4" /><Bolt d="M5 5v12h18" c="#aaa" /><Bolt d="M6 11l4-2 4 4 3-2 5 4" c="#6b8db5" /></>,
  rendering: <><Bolt d="M9 5v12M15 5v12M4 16V9h16v7" c="#c48325" w={2.200} /><path d="M7 0h10v8H7z" fill="#e45656" stroke="#b33" /><path d="M0 16h11v7.500H0z" fill="#f7d63f" stroke="#b8961b" /><path d="M13 16h11v7.500H13z" fill="#7aaee8" stroke="#4a7ab5" /></>,
  history: <><path d="M8 1l6 5-6 5V8q-4 0-2 5-5-1-5-6 1-4 7-3z" fill="#5fa273" stroke="#3f7e53" strokeWidth=".6" /><path d="M15 10l-6 5 6 5v-3q4 0 3 5 6-2 5-7-1-3-8-2z" fill="#e9853f" stroke="#bb5f22" strokeWidth=".6" /></>,
  undo: <path d="M10 3L2 9.500l8 6.500v-4q7-1 5 5-1 2-3 3 10 0 9-8-1-6-11-5.500z" fill="#e8823c" stroke="#bb5f22" />,
  redo: <path d="M14 3l8 6.500-8 6.500v-4q-7-1-5 5 1 2 3 3-10 0-9-8 1-6 11-5.500z" fill="#7ab78b" stroke="#4c8a60" />,
  pseudo: <><path d="M1 1h22v22H1z" fill="#555" /><path d="M3 3h5v18H3z" fill="#d7443a" /><path d="M8 3h4v18H8z" fill="#f5a860" /><path d="M12 3h4v18h-4z" fill="#eef0a8" /><path d="M16 3h5v18h-5z" fill="#4f9fa8" /></>,
  mouse: <g stroke="#333" strokeWidth="1.400"><rect x="3" y="1" width="7" height="12" rx="3.500" fill="#777" transform="rotate(-40 7 7)" /><circle cx="15" cy="16" r="6" fill="#ccc" /><circle cx="15" cy="16" r="2.500" fill="#eee" /><path d="M10 11L22 1M1 11l8 8M5 3l12 14" fill="none" /></g>,
  lock: <><path d="M6 11V7q0-5 6-5t6 5v4" fill="none" stroke="#888" strokeWidth="2.500" /><rect x="1.500" y="10.500" width="21" height="13" rx="1.500" fill="#5c5c5c" /></>,
  crs: <><circle cx="12" cy="12" r="9.500" fill="#666" /><Bolt d="M0 12h24M4 7h16M4 17h16M12 1v22M12 2q-9 10 0 20M12 2q9 10 0 20" c="#ccc" w={1} /><Bolt d="M0 12l5-5M24 12l-5-5M0 12l5 5M24 12l-5 5" c="#666" w={1} /></>,
  bubble: <><path d="M12 3q11 0 11 8t-8 8l-5 4v-4Q1 19 1 11t11-8z" fill="#555" /><g fill="#fff"><circle cx="6.500" cy="11" r="1.700" /><circle cx="12" cy="11" r="1.700" /><circle cx="17.500" cy="11" r="1.700" /></g></>,
};

const Icon = ({ n, s = 24 }: { n: string; s?: number }) => (
  <svg width={s} height={s} viewBox="0 0 24 24" overflow="visible">{icons[n]}</svg>
);

const Caret = ({ c = "#4c4c4c", up }: { c?: string; up?: boolean }) => (
  <svg width="8" height="5" viewBox="0 0 8 5"><path d={up ? "M0 4.500h8L4 .5z" : "M0 .5h8L4 4.500z"} fill={c} /></svg>
);

/* ---------- title and menu ---------- */

const TitleBar = styled.div`
  height: 23px; flex: none; background: #fff; display: flex; align-items: center; padding-left: 3px;
`;
const TitleText = styled.div`margin-left: 4px; flex: 1; letter-spacing: -0.38px;`;
const WinButtons = styled.div`display: flex; gap: 35px; padding-right: 18px; margin-top: -3px;`;

const MenuBar = styled.div`
  height: 20px; flex: none; display: flex; align-items: center; padding-left: 10px; border-bottom: 1px solid #cdcdcd;
`;
const MenuItem = styled.div<{ $w: number }>`
  width: ${(p) => p.$w}px; flex: none; letter-spacing: -0.27px;
  u { text-underline-offset: 2px; }
`;

const menus: [string, string, string, number][] = [
  ["Pro", "j", "ect", 50.5], ["", "E", "dit", 34.5], ["", "V", "iew", 39], ["", "L", "ayer", 42], ["", "S", "ettings", 56],
  ["", "P", "lugins", 53], ["Vect", "o", "r", 47], ["", "R", "aster", 46], ["", "D", "atabase", 62], ["", "W", "eb", 38],
  ["", "M", "esh", 43], ["Pro", "c", "essing", 71], ["", "H", "elp", 40],
];

/* ---------- toolbars ---------- */

const ToolBar = styled.div<{ $h?: number }>`
  height: ${(p) => p.$h ?? 39}px; flex: none; display: flex; align-items: center;
  background: linear-gradient(#fafafa, #ededed); border-bottom: 1px solid #b2b2b2;
`;
const dots = "radial-gradient(circle, #b4b4b4 0.7px, transparent 0.9px)";
const Handle = styled.div<{ $first?: boolean }>`
  width: ${(p) => (p.$first ? 12.5 : 16)}px; height: 18px; flex: none; display: flex; justify-content: ${(p) => (p.$first ? "center" : "flex-end")};
  padding-right: ${(p) => (p.$first ? 0 : 3)}px;
  &::after { content: ""; width: 5px; height: 18px; background: ${dots}; background-size: 2.5px 3px; }
`;
const Tool = styled.div`width: 33px; flex: none; display: flex; justify-content: center;`;
const ToolFrame = styled.div<{ $kind: "hover" | "on" | "none" }>`
  width: 32px; height: 31px; display: flex; align-items: center; justify-content: center; flex: none;
  border: 1px solid ${(p) => (p.$kind === "none" ? "transparent" : "#a9a9a9")}; border-radius: 3px;
  background: ${(p) => (p.$kind === "on" ? "#dcdcdc" : p.$kind === "hover" ? "#fdfdfd" : "transparent")};
`;
const ArrowCell = styled.div`width: 12px; flex: none; display: flex; justify-content: flex-start; padding-left: 1px;`;
const Separator = styled.div`width: 7px; flex: none; display: flex; justify-content: center; &::after { content: ""; width: 1px; height: 19px; background: #cfcfcf; }`;

/* Tokens: "|" handle, "/" separator, "v" enabled menu arrow, "w" disabled menu arrow, otherwise an icon name. */
const Tools = ({ list }: { list: string }) => (
  <>
    {list.split(" ").map((t, i) => {
      if (t === "|") return <Handle key={i} />;
      if (t === "|0") return <Handle key={i} $first />;
      if (t === "/") return <Separator key={i} />;
      if (t === "v") return <ArrowCell key={i}><Caret /></ArrowCell>;
      if (t === "w") return <ArrowCell key={i}><Caret c="#a5a5a5" /></ArrowCell>;
      const kind = t === "open" ? "hover" : t === "zoomIn" ? "on" : "none";
      return <Tool key={i}><ToolFrame $kind={kind}><Icon n={t} s={t === "open" ? 22 : 24} /></ToolFrame></Tool>;
    })}
  </>
);

const row1 = "|0 new open save layoutNew layoutMgr styleMgr | hand pan zoomIn zoomOut zoomFull zoomSel zoomLayer zoomNative zoomLast zoomNext mapView map3d bmNew bmShow clock refresh | identify table abacus gear sigma measure v tip action w textAnn v";
const row2 = "|0 dsm geopackage shp spatialite memory / virtual / | pencils pencil saveEdit addPoly vertex w modAttr trash cut copy paste undoG redoG | abc diagram / abPin abcRed / abPinG abcEye abcMove abcRot abcEdit | db | hexagon globePlus globeFind globeBino | help | topo tableRefresh";
const row3a = "|0 select w selForm w deselect v selLoc | locator";
const row3b = "| greenLens osm | python fire folderArrow swipe leafLayers nightGlobe bowtie greenInfo | | plot | profile | g1 w g2 g3 g4 g5 g6 w g7 w g8 w g9 w g10";

/* ---------- form controls ---------- */

const Field = styled.div<{ $w?: number; $h?: number }>`
  ${(p) => (p.$w ? `width: ${p.$w}px;` : "flex: 1;")}
  height: ${(p) => p.$h ?? 22}px; flex-shrink: 0; display: flex; align-items: center; overflow: hidden;
  border: 1px solid #ababab; border-radius: 3px; background: #fff; padding: 0 4px;
`;
const Combo = styled(Field)`
  background: linear-gradient(#fdfdfd, #eeeeee); padding: 0 6px 0 4px; justify-content: space-between;
`;
const SpinButtons = styled.div`
  width: 14px; height: 100%; margin-right: -4px; flex: none; border-left: 1px solid #ababab; background: #f5f5f5;
  display: flex; flex-direction: column; align-items: center; justify-content: center; gap: 3px;
`;
const Check = () => (
  <svg width="14" height="14" viewBox="0 0 14 14">
    <rect x=".5" y=".5" width="13" height="13" fill="#fff" stroke="#b0b0b0" />
    <path d="M3.500 6.500L6 10L10.500 3" fill="none" stroke="#000" strokeWidth="1.700" />
  </svg>
);
const ClearGlyph = () => (
  <svg width="13" height="10" viewBox="0 0 13 10">
    <path d="M4 0h9v10H4L0 5z" fill="#8c8c8c" /><path d="M5 2.500l5 5M10 2.500l-5 5" stroke="#fff" strokeWidth="1.200" />
  </svg>
);
const DockButtons = () => (
  <svg width="26" height="12" viewBox="0 0 26 12">
    <g fill="none" stroke="#555">
      <rect x=".6" y=".6" width="10.400" height="10.400" rx="2" /><rect x="15" y=".6" width="10.400" height="10.400" rx="2" />
      <path d="M4.500 5V3h4v4h-2M3 5h3.500v3.500H3z" strokeWidth=".9" />
      <path d="M17.500 3.200l5.300 5.300M22.800 3.200l-5.300 5.300" strokeWidth="1.900" />
    </g>
  </svg>
);

/* ---------- body ---------- */

const Body = styled.div`height: 541px; flex: none; display: flex;`;
const Strip = styled.div`
  width: 52px; flex: none; background: linear-gradient(90deg, #fafafa, #ececec); display: flex; flex-direction: column; overflow: hidden; border-right: 1px solid #c3c3c3;
`;
const StripHandle = styled.div`height: 13px; flex: none; padding: 6px 0 0 18px; &::after { content: ""; display: block; width: 18px; height: 5px; background: ${dots}; background-size: 3px 2.5px; }`;
const StripItem = styled.div`height: 32px; flex: none; display: flex; align-items: center; padding-left: 8px; gap: 6px;`;

const LayersDock = styled.div`width: 393px; flex: none; display: flex; flex-direction: column; padding-left: 1px; overflow: hidden;`;
const DockTitle = styled.div<{ $pr: number; $pl?: number }>`
  height: 22px; flex: none; display: flex; align-items: center; justify-content: space-between; padding: 0 ${(p) => p.$pr}px 0 ${(p) => p.$pl ?? 3}px;
  ${segoe}
  && ${Text} { padding-top: 0; }
`;
const LayerTools = styled.div`height: 29px; flex: none; display: flex; align-items: center; padding: 0 0 2px 3px;`;
const LayerTool = styled.div<{ $w: number; $on?: boolean }>`
  width: ${(p) => p.$w}px; height: 24px; flex: none; display: flex; align-items: center; justify-content: center;
  ${(p) => p.$on && "border: 1px solid #ababab; border-radius: 3px; background: #dcdcdc;"}
`;
const Tree = styled.div`width: 386px; flex: 1; background: #fff; border: 1px solid #b9b9b9; border-bottom: 0; overflow: hidden; ${lowered}`;
const TreeRow = styled.div<{ $sel?: boolean; $pad: number }>`
  height: 18px; display: flex; align-items: center; padding-left: ${(p) => p.$pad}px; background: ${(p) => (p.$sel ? "#efefef" : "#fff")};
`;
const Slot = styled.div<{ $w: number }>`width: ${(p) => p.$w}px; flex: none; display: flex; align-items: center;`;
const Swatch = styled.div<{ $c: string; $b?: string }>`width: 16px; height: 16px; background: ${(p) => p.$c}; border: 1px solid ${(p) => p.$b ?? p.$c};`;

const MapFrame = styled.div`width: 579px; flex: none; margin-top: 1px; border: 1px solid #a9a9a9; background: #fff; overflow: hidden;`;

/* ---------- map drawing ---------- */

const specks = (seed: number, n: number, cx: number, cy: number, rx: number, ry: number, smax = 2, flat = false) => {
  const r = rng(seed);
  let d = "";
  for (let i = 0; i < n; i++) {
    const a = flat ? r() * 2 - 1 : (r() + r() + r()) / 1.5 - 1;
    const b = flat ? r() * 2 - 1 : (r() + r() + r()) / 1.5 - 1;
    const w = 1 + Math.floor(r() * smax), h = 1 + Math.floor(r() * smax);
    d += `M${Math.round(cx + a * rx)} ${Math.round(cy + b * ry)}h${w}v${h}h-${w}z`;
  }
  return d;
};

const river = (seed: number, x: number, y: number, ang: number, len: number, depth: number): string => {
  const r = rng(seed * 31);
  let out = "";
  const walk = (px: number, py: number, a0: number, l: number, k: number) => {
    out += `M${px.toFixed(1)} ${py.toFixed(1)}`;
    const kids: [number, number, number][] = [];
    let side = r() < 0.5 ? -1 : 1;
    let a = a0;
    for (let s = 0; s < l; s += 3) {
      a = a0 + (a - a0) * 0.7 + (r() - 0.5) * 0.9;
      px += Math.cos(a) * 3; py += Math.sin(a) * 3;
      out += `L${px.toFixed(1)} ${py.toFixed(1)}`;
      if (k > 0 && r() < 0.42) { kids.push([px, py, a0 + side * (0.7 + r() * 0.4)]); side = -side; }
    }
    kids.forEach(([qx, qy, qa]) => walk(qx, qy, qa, k > 1 ? l * (0.25 + r() * 0.25) : 4 + r() * 7, k - 1));
  };
  walk(x, y, ang, len, depth);
  return out;
};

/* seed, x, y, direction, length, branching depth */
const rivers: [number, number, number, number, number, number][] = [
  [1, 527, 350, -1.65, 40, 1], [2, 505, 340, -2.4, 45, 2], [3, 496, 352, -2.9, 40, 1], [4, 530, 318, -0.25, 58, 2], [5, 532, 300, -0.35, 48, 1],
  [6, 577, 352, -1.4, 34, 1], [7, 598, 352, -1.6, 34, 1], [8, 612, 352, -1.6, 40, 1], [9, 560, 345, -1.9, 20, 1], [10, 686, 322, -0.9, 45, 2],
  [11, 732, 322, -1.57, 46, 1], [12, 790, 325, -2.1, 60, 2], [13, 832, 315, -2.3, 45, 2], [14, 845, 310, -0.9, 45, 2], [15, 810, 335, -2.8, 55, 2],
  [16, 848, 332, -0.15, 36, 1], [17, 930, 350, -1.6, 65, 2], [18, 988, 352, -1.2, 75, 1], [19, 930, 325, -0.8, 50, 2], [20, 915, 345, -2.4, 35, 2],
  [21, 752, 350, -2.2, 25, 1], [22, 455, 350, -1.4, 50, 0], [23, 612, 276, 0.5, 40, 1], [24, 700, 318, -0.3, 35, 1], [25, 458, 398, -1.7, 60, 0], [26, 750, 305, 0.8, 40, 1],
  [27, 588, 352, -1.5, 30, 1], [28, 622, 345, -2.0, 30, 1], [29, 478, 320, -2.2, 35, 1], [30, 510, 320, -1.9, 30, 1],
];
const riverPath = rivers.map((a) => river(...a)).join("");

const demOutline = "446 271 492 271 492 272 603 272 603 273 693 273 693 274 820 274 820 275 886 275 886 276 946 276 946 277 1023 277 1023 360 470 360 470 404 446 404";

const boundary = "M637 402L638 388L647 374L655 378L663 380L675 384L681 391L684 394.500L710 395L710 391L706 386L706 383L713 382L714 378L736 378L752 381L764 382L923 384L923 392L919 397L912 399L909 404L911 412L914 422L921 423L925 427L929 425L932 420L940 415L947 412.500L952 415L961 415L967 424L967 432L961 437L949 441L944 445L945 452L953 455L963 456L967 461L971 462L974 466L979 463L988 465L1004 464L1008 469L1008 487.500Q980 486 960 483Q930 480 890 470Q850 462 815 464Q790 468 760 468L693 469L692 478L687 478";

const MapDrawing = () => (
  <svg width="577" height="538" viewBox="446 161 577 538">
    <defs>
      <clipPath id="dem"><polygon points={demOutline} /></clipPath>
      <clipPath id="land"><path d="M459 350h45v1h90v1h100v1h120v1h100v1h70v1h39V492L687 479V402H459z" /></clipPath>
      <filter id="feathery" x="-10%" y="-30%" width="120%" height="160%" colorInterpolationFilters="sRGB">
        <feGaussianBlur stdDeviation="3.5" result="b" />
        <feTurbulence type="fractalNoise" baseFrequency=".14" numOctaves="4" seed="11" result="t" />
        <feDisplacementMap in="b" in2="t" scale="30" xChannelSelector="R" yChannelSelector="G" result="d" />
        <feGaussianBlur in="d" stdDeviation=".7" />
      </filter>
      <filter id="soft"><feGaussianBlur stdDeviation="2" /></filter>
      <filter id="relief" colorInterpolationFilters="sRGB">
        <feTurbulence type="fractalNoise" baseFrequency=".035" numOctaves="4" seed="21" />
        <feColorMatrix values="2.6 0 0 0 -.9 2.6 0 0 0 -.9 2.6 0 0 0 -.9 0 0 0 0 .25" />
      </filter>
      <filter id="grain" colorInterpolationFilters="sRGB">
        <feTurbulence type="fractalNoise" baseFrequency=".45" numOctaves="2" seed="5" />
        <feColorMatrix values="1.6 0 0 0 -.45 1.6 0 0 0 -.45 1.6 0 0 0 -.45 0 0 0 0 .08" />
      </filter>
      <filter id="ragged" x="-20%" y="-20%" width="140%" height="140%"><feTurbulence type="fractalNoise" baseFrequency=".25" numOctaves="2" seed="8" result="t" /><feDisplacementMap in="SourceGraphic" in2="t" scale="8" xChannelSelector="R" yChannelSelector="G" /></filter>
    </defs>

    <g clipPath="url(#dem)">
      <rect x="446" y="270" width="577" height="135" fill="#484848" />
      <g filter="url(#feathery)">
        <g fill="#a2a2a2">
          <path d="M430 290L470 276L482 295L496 305L494 320L522 340L517 355L490 350L465 410H430z" />
          <path d="M508 293L524 284L529 305L517 312zM538 286L580 281L598 300L594 325L562 315L535 322zM535 356L547 330L582 330L602 304L642 320L652 356z" />
          <path d="M606 268L640 280L665 300L660 308L632 290zM684 290L700 268L770 272L800 280L835 310L832 330L802 322L772 312L750 328L725 322L700 314z" />
          <path d="M712 356L740 330L772 345L778 365H712zM822 268L890 270L893 318V370H855L850 330L864 318L838 300z" />
        </g>
        <g fill="#dcdcdc">
          <path d="M442 285L468 285L455 310L446 330zM558 288L590 285L588 308zM600 312L625 322L642 348L612 342zM712 272L768 273L788 292L772 300L730 295zM850 322L890 325L893 345L865 335zM590 308l20 5-10 20z" />
        </g>
        <g fill="#303030">
          <path d="M472 262L540 262L534 290L538 300L534 370H520L522 310L500 322L482 295zM540 262H602L628 290L655 310L692 302L702 322L745 328L720 342L705 375H660L632 318L592 292L560 280z" />
          <path d="M655 266L686 268L690 312L650 318zM782 338L830 345L838 308L850 322L850 355L800 375z" />
          <path d="M466 330L500 335L530 360H466z" opacity=".4" />
        </g>
      </g>
      <rect x="446" y="270" width="447" height="135" filter="url(#relief)" />
      <path d="M893 270h140v90H892z" fill="#4e4e4e" />
      <g filter="url(#feathery)"><path d="M900 340L930 290L950 370H905zM975 290L1003 285L990 370zM910 262h60l-30 28z" fill="#363636" /><path d="M955 285L980 282L982 305L965 350L950 330zM1005 290l25 20-8 50h-10z" fill="#6a6a6a" /></g>
      <g fill="none" strokeLinejoin="round">
        <path d={riverPath} stroke="#2c2c2c" strokeWidth="4" opacity=".4" filter="url(#soft)" />
        <path d={riverPath} stroke="#353535" strokeWidth="1.300" opacity=".6" />
      </g>
      <path d="M526 285L528 352M836 345L840 312" stroke="#2e2e2e" strokeWidth="6" opacity=".8" filter="url(#ragged)" />
      <rect x="446" y="270" width="577" height="135" filter="url(#grain)" />
      <path d={specks(77, 9, 836, 298, 14, 10, 1)} fill="#d8d8d8" shapeRendering="crispEdges" />
    </g>

    <g clipPath="url(#land)" shapeRendering="crispEdges">
      <path d="M459 350h570v145H459z" fill="#7e0000" />
      <path d={specks(2, 500, 830, 410, 190, 60, 4, true)} fill="#740000" />
      <path d="M770 445L800 437L812 413L850 410L880 416L900 430L925 432L925 455L900 462L800 462z" fill="#760000" />
      <g filter="url(#ragged)" fill="#560000">
        <path d="M849 406L870 410L892 420L907 426L927 426L950 416L964 420L968 434L950 445L948 454L964 462L952 468L942 464L902 462L892 452L868 446L870 440L897 442L920 448L924 432L897 429L882 422L864 414z" />
        <path d="M692 420L702 414L716 406L720 412L702 426L694 442z" />
      </g>
      <g fill="#000">
        <path d={specks(3, 900, 575, 378, 118, 27, 2, true)} />
        <path d={specks(4, 180, 692, 380, 28, 26, 3)} />
        <path d={specks(5, 110, 960, 375, 60, 20, 2)} />
        <path d={specks(6, 110, 993, 430, 32, 40, 2)} />
        <path d={specks(7, 60, 830, 365, 180, 15, 1, true)} />
        <path d={specks(8, 70, 850, 420, 60, 50, 1, true)} />
      </g>
      <g fill="#330066">
        <path d={specks(11, 260, 634, 366, 28, 24, 4)} />
        <path d={specks(12, 180, 662, 368, 24, 22, 5)} />
        <path d="M620 355h36v8h12l14 12v14h-20v-8h-16v-4h-16v8h-14z" filter="url(#ragged)" />
        <path d={specks(43, 90, 622, 392, 22, 14, 4)} />
        <path d={specks(13, 60, 468, 386, 12, 18, 3)} /><path d={specks(14, 50, 554, 373, 8, 9, 4)} />
        <path d={specks(15, 50, 485, 370, 26, 12, 2)} /><path d={specks(16, 70, 600, 378, 22, 7, 3)} />
        <path d={specks(17, 110, 694, 361, 10, 22, 4)} /><path d={specks(18, 140, 731, 367, 14, 16, 4)} />
        <path d={specks(27, 40, 736, 354, 8, 6, 3)} />
      </g>
      <g fill="#370058">
        <path d={specks(19, 560, 732, 404, 26, 40, 4)} /><path d={specks(20, 240, 756, 405, 26, 26, 2)} />
        <path d={specks(21, 50, 783, 387, 8, 8, 2)} />
      </g>
      <path d="M718 388l22 2 8 25-8 14-14 3-6-12z" fill="#390060" filter="url(#ragged)" />
      <path d={specks(45, 70, 735, 402, 18, 26, 2)} fill="#6a0010" />
      <path d="M698 462L717 454L737 456L754 442L768 440L768 452L790 454L800 460L760 470H693z" fill="#400050" filter="url(#ragged)" />
      <path d={specks(22, 280, 745, 458, 56, 12, 4)} fill="#3e0066" />
      <path d={specks(24, 260, 800, 452, 60, 9, 3)} fill="#3f1470" />
      <path d={specks(23, 200, 790, 457, 62, 8, 3)} fill="#150000" />
      <path d={specks(25, 120, 900, 458, 24, 12, 3)} fill="#180000" />
      <path d={specks(26, 420, 965, 476, 66, 9, 3)} fill="#1c0000" />
      <path d={specks(44, 300, 985, 480, 60, 7, 3, true)} fill="#2a0000" />
      <path d={specks(28, 50, 1000, 478, 40, 9, 2)} fill="#3e0066" />
      <g fill="#4a4a9c"><path d={specks(31, 60, 798, 450, 24, 6, 3)} /><path d={specks(29, 24, 850, 395, 60, 40, 2, true)} /></g>

      <path d="M692 453V438L695 423L704 419L712 408L717 406L718 423L724 428L745 425L762 423L778 419L786 411L795 405L802 403L825 403L836 405L847 406L846 409L812 411L808 420L803 430L790 433L778 436L765 440L755 446L738 450L735 455L722 457L712 453z" fill="#c80000" />
      <path d={specks(32, 60, 740, 422, 22, 4, 3)} fill="#3a0060" />

      <path d="M637 403L638 388L647 375L655 378L668 383L675 384L683 394L697 396L706 404L698 410L695 425L692 440L690 450L687 460V403z" fill="#36b67c" />
      <path d="M658 384h10v18h-12z" fill="#63c763" /><path d="M668 386h12v16h-10z" fill="#2f8f86" />
      <path d={specks(33, 130, 655, 392, 20, 12, 1, true)} fill="#226" /><path d={specks(34, 120, 692, 422, 7, 35, 2, true)} fill="#32105c" />
      <path d={specks(35, 40, 704, 402, 12, 8, 2)} fill="#56c97a" />
      <path d={specks(36, 30, 883, 413, 12, 4, 3)} fill="#3e8aa0" /><path d={specks(37, 26, 889, 398, 5, 22, 2, true)} fill="#3e7d9e" />
      <path d={specks(38, 12, 798, 394, 6, 8, 2)} fill="#4a9aa8" /><path d={specks(39, 14, 757, 419, 8, 4, 3)} fill="#36b67c" />
      <path d={specks(40, 8, 763, 442, 4, 6, 3)} fill="#36a69c" /><path d={specks(41, 14, 855, 420, 20, 30, 1)} fill="#45b3a0" />
      <path d={specks(42, 20, 700, 454, 14, 4, 2)} fill="#36b67c" />
    </g>
    <path d="M504 350h90v1h58M983 356h40" stroke="#000" strokeWidth="1.500" fill="none" shapeRendering="crispEdges" />

    <path d="M687 469L760 469Q790 468 815 464Q850 463 890 471Q930 480 960 484Q990 487 1023 491V545H767V544H620V543H687z" fill="#c80000" />
    <g shapeRendering="crispEdges">
      <path d="M446 542H708V543H818V544H936V545H1023V612H1011V611H833V610H719V609H446z" fill="#101010" />
      <path d="M891 544h45v1h87v67h-12v-1H890V552h1z" fill="#020202" />
    </g>
    <path d={boundary} fill="none" stroke="#d4ae1c" strokeWidth="1.300" />
  </svg>
);

/* ---------- styling dock ---------- */

const Splitter = styled.div`width: 4px; flex: none; display: flex; align-items: center; &::after { content: ""; width: 3px; height: 16px; background: ${dots}; background-size: 3px 3px; }`;
const StyleDock = styled.div`flex: 1; min-width: 0; display: flex; flex-direction: column; padding: 0 1px 0 5px; ${tahoma} ${lowered}`;
const StyleBody = styled.div`flex: 1; display: flex; padding-top: 2px; min-height: 0;`;
const TabColumn = styled.div`width: 38px; height: 489px; flex: none; display: flex; flex-direction: column; background: #5b5b5b;`;
const Tab = styled.div<{ $on?: boolean; $h: number }>`
  height: ${(p) => p.$h}px; flex: none; display: flex; align-items: center; justify-content: center; padding-right: ${(p) => (p.$on ? 3 : 8)}px; background: ${(p) => (p.$on ? "#efefef" : "transparent")};
`;
const Content = styled.div`width: 293px; flex: none; display: flex; flex-direction: column; padding-left: 3px;`;
const ScrollRow = styled.div`height: 446px; flex: none; display: flex;`;
const Form = styled.div`width: 275px; flex: none; display: flex; flex-direction: column; padding-left: 9px; overflow: hidden;`;
const Line = styled.div<{ $h: number; $pl?: number }>`
  height: ${(p) => p.$h}px; flex: none; display: flex; align-items: center; padding-left: ${(p) => p.$pl ?? 0}px;
`;
const VScroll = styled.div`width: 14px; margin-top: 4px; flex: none; display: flex; flex-direction: column; border-left: 1px solid #b5b5b5; background: #e4e4e4;`;
const VBtn = styled.div<{ $h: number; $top?: boolean; $foot?: boolean }>`
  height: ${(p) => p.$h}px; flex: none; display: flex; align-items: center; justify-content: center; background: linear-gradient(90deg, #fdfdfd, #efefef);
  border-bottom: ${(p) => (p.$top ? "1px solid #b5b5b5" : "0")};
  border-top: ${(p) => (p.$foot ? "1px solid #b5b5b5" : "0")};
`;
const Grow = styled.div`flex: 1;`;
const HScroll = styled.div`width: 275px; height: 14px; flex: none; display: flex; border-top: 1px solid #b5b5b5; background: linear-gradient(#fdfdfd, #f0f0f0);`;
const HBtn = styled.div<{ $w: number; $r?: boolean }>`width: ${(p) => p.$w}px; display: flex; align-items: center; justify-content: center; border-right: ${(p) => (p.$r ? 0 : 1)}px solid #b5b5b5;`;
const HGap = styled.div`width: 10px; background: #e2e2e2; border-left: 1px solid #b5b5b5; border-right: 1px solid #b5b5b5;`;
const Ramp = styled.div`
  height: 16px; width: 146px; flex: none; background: linear-gradient(90deg, #440154, #482878 13%, #3e4a89 25%, #31688e 37%, #26828e 50%, #1f9e89 60%, #35b779 70%, #6dcd59 80%, #b4de2c 91%, #fde725);
`;
const SmallArrow = styled(Field)`padding: 0; justify-content: center; background: linear-gradient(#fdfdfd, #eee);`;
const MinMaxBox = styled(Field)`padding: 2px 3px 0 0; justify-content: flex-end; letter-spacing: -0.38px; margin-right: 5px;`;
const SectionTitle = styled.div`padding-top: 2px; font-family: "DejaVu Sans", sans-serif; font-stretch: normal; font-weight: 700; font-size: 11px; letter-spacing: -0.57px;`;
const ClassTable = styled.div`width: 256px; flex: 1; margin: 14px 0 0 6px; border: 1px solid #ababab; border-bottom: 0; background: #fff; ${segoe}`;
const HeadRow = styled.div`height: 20px; display: flex; background: linear-gradient(#fcfcfc, #efefef); border-bottom: 1px solid #b9b9b9; line-height: 21px; margin-bottom: 1px;`;
const HeadCell = styled.div<{ $w: number }>`width: ${(p) => p.$w}px; padding-left: 2px; border-right: 1px solid #cdcdcd; letter-spacing: -0.3px;`;
const ClassRow = styled.div`height: 44px; display: flex; align-items: center;`;
const ClassValue = styled.div`width: 95px; padding-top: 2px; text-align: right; letter-spacing: -0.62px;`;
const ClassColor = styled.div<{ $c: string }>`width: 42px; height: 42px; border-radius: 7px; margin: 0 12px 0 13px; background: ${(p) => p.$c};`;
const Actions = styled.div`height: 34px; margin-top: 1px; flex: none; display: flex; align-items: center;`;
const PushButton = styled.div<{ $w: number; $ml?: number }>`
  width: ${(p) => p.$w}px; height: ${(p) => (p.$w > 30 ? 21 : 23)}px; margin-left: ${(p) => p.$ml ?? 0}px; flex: none; display: flex; align-items: center; justify-content: center;
  border: 1px solid #ababab; border-radius: 3px; background: linear-gradient(#fdfdfd, #eeeeee);
`;

const classes: [string, string, string][] = [
  ["5.488136498...", "#440154", "5.4881"], ["8.244183490...", "#31688e", "8.2442"],
  ["18.39511355...", "#35b779", "18.3951"], ["117.1620929...", "#fde725", "117.1621"],
];

/* ---------- status bar ---------- */

const StatusBar = styled.div`height: 28px; flex: none; display: flex; align-items: center; padding-left: 4px; ${tahoma} ${lowered}`;
const SearchBox = styled.div`
  width: 200px; height: 22px; flex: none; display: flex; align-items: center; background: #fff; border: 1px solid #45a7ea; border-radius: 3px; padding: 0 8px 0 8px;
`;
const TextCaret = styled.div`width: 1px; height: 13px; background: #000;`;
const Gap = styled.div<{ $w: number }>`width: ${(p) => p.$w}px; flex: none;`;
const ScaleArrow = styled.div`width: 20px; height: 100%; margin-right: -4px; border-left: 1px solid #ababab; background: #f5f5f5; display: flex; align-items: center; justify-content: center;`;

/* ---------- result popup ---------- */

const Popup = styled.div`
  position: absolute; left: 4px; top: 401px; width: 683px; height: 302px; background: #fff; border: 1px solid #a9a9a9; z-index: 5;
`;
const PopupRow = styled.div<{ $on?: boolean }>`
  height: 15px; display: flex; align-items: center; padding-left: 3px; gap: 7px; line-height: 15px; background: ${(p) => (p.$on ? "#efefef" : "transparent")};
`;

const results: [string, string][] = [
  ["warp", "Warp (reproject)"], ["gearL", "Assign projection"], ["clip", "Clip raster by mask layer"],
  ["gearL", "Reproject layer"], ["saga", "Warping shapes"], ["saga", "Water retention capacity"],
];

const strip = ["addVector", "addRaster", "addMesh", "addCsv", "addFeather", "addVirtual", "addPg", "addDb"];

export default function App() {
  return (
    <Window>
      <Global />
      <TitleBar>
        <svg width="16" height="16" viewBox="0 0 16 16">
          <circle cx="7.500" cy="7.800" r="5.500" fill="none" stroke="#6fa22f" strokeWidth="3.600" />
          <path d="M8 8l7.500 7.500h-4L7.500 11z" fill="#85b72c" /><path d="M7 7l4 .5 1.500 2-1.500 2.500z" fill="#ee7913" />
        </svg>
        <TitleText>*Untitled Project — QGIS</TitleText>
        <WinButtons>
          <svg width="11" height="11" viewBox="0 0 11 11"><path d="M0 6.500h10" stroke="#000" /></svg>
          <svg width="11" height="11" viewBox="0 0 11 11"><path d="M.5 3.500h7v7h-7zM2.500 3V.5h7.500v7.500H8" fill="none" stroke="#000" /></svg>
          <svg width="11" height="11" viewBox="0 0 11 11"><path d="M.5 .5l10 10M10.500 .5l-10 10" stroke="#000" /></svg>
        </WinButtons>
      </TitleBar>
      <MenuBar>
        {menus.map(([a, u, b, w], i) => <MenuItem key={i} $w={w}>{a}<u>{u}</u>{b}</MenuItem>)}
      </MenuBar>
      <ToolBar><Tools list={row1} /></ToolBar>
      <ToolBar><Tools list={row2} /></ToolBar>
      <ToolBar $h={38}>
        <Tools list={row3a} />
        <Combo $w={88}><Text $ls={-0.6}>Ghana</Text><Caret /></Combo>
        <Gap $w={1} />
        <Field $w={108}><Text $color="#777" $ls={-0.3}>Search for…</Text></Field>
        <Tools list={row3b} />
        <Grow />
        <Text $bold $w={13}>»</Text>
      </ToolBar>

      <Body>
        <Strip>
          <StripHandle />
          {strip.map((n) => <StripItem key={n}><Icon n={n} />{n === "addPg" && <Caret />}</StripItem>)}
        </Strip>
        <LayersDock>
          <DockTitle $pr={8}><Text $ls={-0.2}>Layers</Text><DockButtons /></DockTitle>
          <LayerTools>
            <LayerTool $w={24} $on><Icon n="brush" s={15} /></LayerTool>
            <LayerTool $w={27}><Icon n="addGroup" s={15} /></LayerTool>
            <LayerTool $w={24}><Icon n="eye" s={16} /></LayerTool>
            <LayerTool $w={25}><Icon n="filter" s={15} /></LayerTool>
            <LayerTool $w={26}><Icon n="epsilon" s={15} /></LayerTool>
            <LayerTool $w={8}><Caret c="#999" /></LayerTool>
            <LayerTool $w={31}><Icon n="expand" s={15} /></LayerTool>
            <LayerTool $w={20}><Icon n="collapse" s={15} /></LayerTool>
            <LayerTool $w={28}><Icon n="remove" s={15} /></LayerTool>
          </LayerTools>
          <Tree>
            <TreeRow $sel $pad={5}><Slot $w={17}><Caret /></Slot><Slot $w={21}><Check /></Slot><Slot $w={21}><Icon n="rasterB" s={15} /></Slot><Text $bold $u $ls={-0.48}>HRSL_Lagos_Population</Text></TreeRow>
            {classes.map(([, c, l]) => <TreeRow key={l} $pad={42}><Slot $w={22}><Swatch $c={c} /></Slot><Text $ls={-0.7}>{l}</Text></TreeRow>)}
            <TreeRow $pad={22}><Slot $w={20}><Check /></Slot><Slot $w={22}><Swatch $c="#fff" $b="#e3da8c" /></Slot><Text $bold $ls={-0.65}>lagos_admin_boundary</Text></TreeRow>
            <TreeRow $pad={5}><Slot $w={17}><Caret /></Slot><Slot $w={20}><Check /></Slot><Slot $w={22}><Icon n="group" s={15} /></Slot><Text>LandCover</Text></TreeRow>
            {[2019, 2018, 2017, 2016].map((y) => (
              <TreeRow key={y} $pad={42}><Slot $w={21}><Check /></Slot><Slot $w={21}><Icon n="raster" s={15} /></Slot><Text $bold $ls={-0.4}>{`LandCover${y}lagos`}</Text></TreeRow>
            ))}
          </Tree>
        </LayersDock>
        <MapFrame><MapDrawing /></MapFrame>
        <Splitter />
        <StyleDock>
          <DockTitle $pr={0} $pl={1}><Text $ls={-0.3}>Layer Styling</Text><DockButtons /></DockTitle>
          <Combo $w={330} $h={25}><Slot $w={19}><Icon n="raster" s={15} /></Slot><Text $ls={-0.03}>HRSL_Lagos_Population</Text><Grow /><Caret /></Combo>
          <StyleBody>
            <TabColumn>
              <Tab $on $h={36}><Icon n="brush2" s={22} /></Tab>
              <Tab $h={34}><Icon n="transparency" s={22} /></Tab>
              <Tab $h={27}><Icon n="histogram" s={22} /></Tab>
              <Tab $h={38}><Icon n="rendering" s={22} /></Tab>
              <Tab $h={26}><Icon n="history" s={20} /></Tab>
            </TabColumn>
            <Content>
              <ScrollRow>
                <Form>
                  <Line $h={50}><Combo $w={270} $h={24}><Gap $w={2} /><Slot $w={17}><Icon n="pseudo" s={12} /></Slot><Text>Singleband pseudocolor</Text><Grow /><Caret /><Gap $w={3} /></Combo></Line>
                  <Line $h={14} $pl={2}><Text $w={31}>Band</Text><Combo $w={232}><Text $ls={-0.05}>Band 1 (Gray)</Text><Caret /></Combo></Line>
                  <Line $h={42} $pl={2}><Text $w={31}>Min</Text><MinMaxBox $w={100}>4881364986140682</MinMaxBox><Text $w={27}>Max</Text><MinMaxBox $w={100}>1621376478366301</MinMaxBox></Line>
                  <Line $h={8} $pl={8}>
                    <Slot $w={16}><svg width="8" height="11" viewBox="0 0 8 11"><path d="M0 0l7 5.500-7 5.500z" fill="#333" /></svg></Slot>
                    <SectionTitle>Min / Max Value Settings</SectionTitle>
                  </Line>
                  <Line $h={54} $pl={5}><Text $w={90}>Interpolation</Text><Combo $w={167}><Text>Linear</Text><Caret /></Combo></Line>
                  <Line $h={2} $pl={5}><Text $w={90}>Color ramp</Text><Field $w={154}><Ramp /></Field><Gap $w={1} /><SmallArrow $w={12}><Caret /></SmallArrow></Line>
                  <Line $h={54} $pl={5}><Text $w={90}>Label unit suffix</Text><Field $w={167} /></Line>
                  <Line $h={2} $pl={5}><Text $w={90}>Label precision</Text><Field $w={167} $h={20}><Text>4</Text><Grow /><ClearGlyph /><Gap $w={11} /><SpinButtons><Caret up /><Caret /></SpinButtons></Field></Line>
                  <ClassTable>
                    <HeadRow><HeadCell $w={100}>Value</HeadCell><HeadCell $w={59}>Color</HeadCell><HeadCell $w={95}>Label</HeadCell></HeadRow>
                    {classes.map(([v, c, l]) => (
                      <ClassRow key={l}><ClassValue>{v}</ClassValue><ClassColor $c={c} /><Text $color="#a0a0a0" $ls={-0.7}>{l}</Text></ClassRow>
                    ))}
                  </ClassTable>
                </Form>
                <VScroll><VBtn $h={14} $top><Caret up /></VBtn><VBtn $h={177} $top /><Grow /><VBtn $h={14} $foot><Caret /></VBtn></VScroll>
              </ScrollRow>
              <HScroll>
                <HBtn $w={14}><svg width="5" height="8" viewBox="0 0 5 8"><path d="M5 0v8L0 4z" fill="#444" /></svg></HBtn>
                <Grow /><HGap />
                <HBtn $w={14} $r><svg width="5" height="8" viewBox="0 0 5 8"><path d="M0 0v8l5-4z" fill="#444" /></svg></HBtn>
              </HScroll>
              <Actions>
                <PushButton $w={24}><Icon n="undo" s={14} /></PushButton>
                <PushButton $w={24} $ml={6}><Icon n="redo" s={14} /></PushButton>
                <Gap $w={68} /><Check /><Gap $w={4} /><Text $w={69}>Live update</Text>
                <PushButton $w={80}><Text $ls={0}>Apply</Text></PushButton>
              </Actions>
            </Content>
          </StyleBody>
        </StyleDock>
      </Body>

      <StatusBar>
        <SearchBox>
          <svg width="13" height="13" viewBox="0 0 13 13"><circle cx="5" cy="5" r="4" fill="none" stroke="#999" strokeWidth="1.400" /><path d="M8 8l4 4" stroke="#999" strokeWidth="1.600" /></svg>
          <Gap $w={6} /><Text $ls={-0.05}>warp</Text><TextCaret /><Grow /><ClearGlyph />
        </SearchBox>
        <Gap $w={363} /><Text $w={57}>Coordinate</Text>
        <Field $w={91}><Gap $w={2} /><Text $ls={0}>120870,194632</Text></Field>
        <Gap $w={4} /><Slot $w={28}><Icon n="mouse" s={16} /></Slot>
        <Text $w={29}>Scale</Text>
        <Field $w={81}><Text $ls={-0.3}>1:1254931</Text><Grow /><ScaleArrow><Caret /></ScaleArrow></Field>
        <Gap $w={11} /><Slot $w={21}><Icon n="lock" s={14} /></Slot>
        <Text $w={48}>Magnifier</Text>
        <Field $w={88}><Text>100%</Text><Grow /><SpinButtons><Caret up /><Caret /></SpinButtons></Field>
        <Gap $w={8} /><Text $w={51}>Rotation</Text>
        <Field $w={84}><Text>0.0 °</Text><Grow /><SpinButtons><Caret up /><Caret /></SpinButtons></Field>
        <Gap $w={6} /><Check /><Gap $w={4} /><Text $w={53}>Render</Text>
        <Slot $w={19}><Icon n="crs" s={15} /></Slot><Text $w={78}>EPSG:26392</Text>
        <Icon n="bubble" s={17} />
      </StatusBar>

      <Popup>
        <PopupRow><Text $color="#808080" $ls={-0.25}>Processing Algorithms</Text></PopupRow>
        {results.map(([ic, t], i) => <PopupRow key={t} $on={i === 0}><Icon n={ic} s={15} /><Text $ls={-0.35}>{t}</Text></PopupRow>)}
      </Popup>
    </Window>
  );
}
